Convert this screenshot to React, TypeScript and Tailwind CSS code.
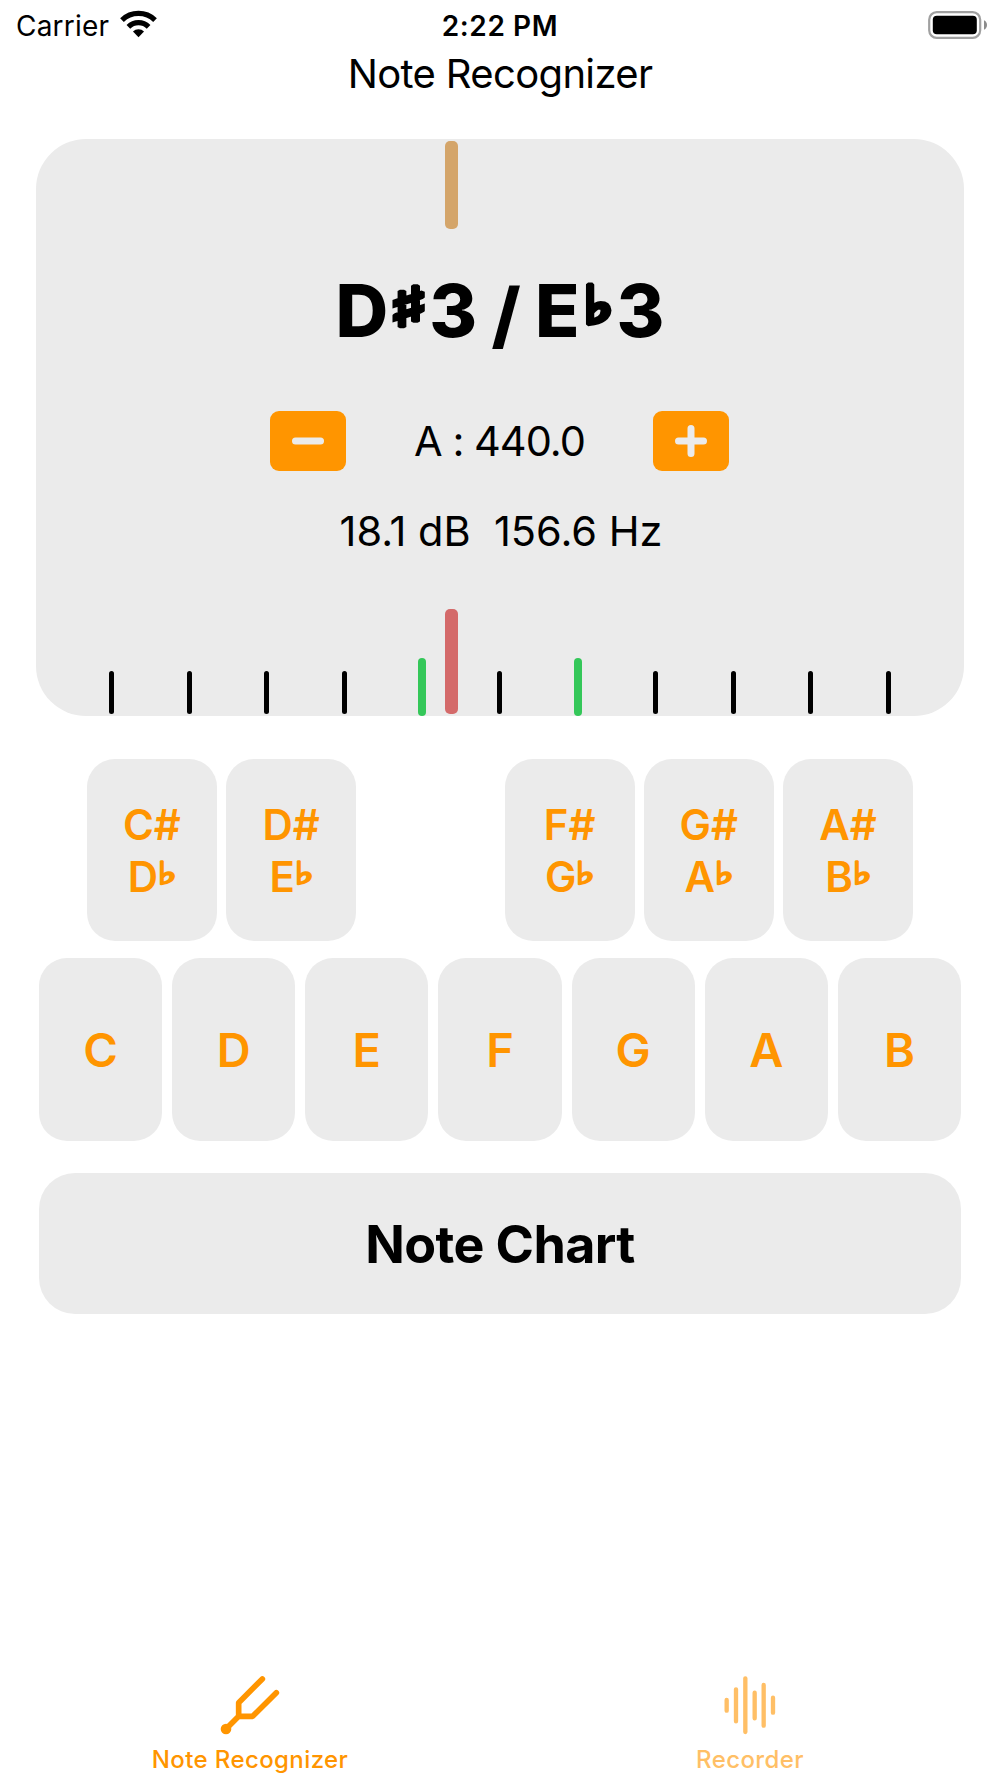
import type { ReactNode } from "react";

const sharps = [
  ["C#", "D"],
  ["D#", "E"],
  null,
  ["F#", "G"],
  ["G#", "A"],
  ["A#", "B"],
];

const naturals = ["C", "D", "E", "F", "G", "A", "B"];

// true = the in-tune limits, drawn taller and green
const ticks = [false, false, false, false, true, false, true, false, false, false, false];

const StatusBar = () => (
  <div className="grid h-[50px] grid-cols-3 items-center">
    <div className="flex items-center pl-4">
      <span className="w-[104px] pt-0.5 text-[28px] leading-none tracking-[0.2px]">Carrier</span>
      <svg className="-mt-0.5 h-7 w-[37px]" viewBox="360 28 112 84" fill="none">
        <path d="M366 58.2A72 72 0 0 1 466 58.2" stroke="#000" strokeWidth="16" />
        <path d="M385.4 78.4A44 44 0 0 1 446.6 78.4" stroke="#000" strokeWidth="16" />
        <path d="M416 110L399.3 92.7A24 24 0 0 1 432.7 92.7Z" fill="#000" />
      </svg>
    </div>
    <div className="pt-px text-center text-[28px] leading-none font-semibold tracking-[0.6px]">2:22 PM</div>
    <div className="flex justify-end pr-3">
      <svg className="h-7 w-[60px]" viewBox="0 0 60 28">
        <rect x="1.2" y="1.2" width="51" height="25.6" rx="7.5" fill="none" stroke="#a0a0a0" strokeWidth="2.2" />
        <rect x="4.8" y="4.8" width="44" height="18.4" rx="4" fill="#000" />
        <path d="M56 9.2C60 11 60 17 56 18.8Z" fill="#8c8c8c" />
      </svg>
    </div>
  </div>
);

const StepButton = ({ children }: { children: ReactNode }) => (
  <button className="flex h-[60px] w-[76px] items-center justify-center rounded-[9px] bg-[#ff9500]">
    <svg className="h-8 w-8" viewBox="0 0 32 32" stroke="#ebebeb" strokeWidth="7" strokeLinecap="round">
      {children}
    </svg>
  </button>
);

const Tuner = () => (
  <div className="mx-9 mt-[42px] flex h-[577px] flex-col rounded-[50px] bg-[#ebebeb]">
    <div className="mt-0.5 ml-[409px] h-[88px] w-[13px] rounded-[5px] bg-[#d4a56a]" />

    <h1 className="mt-9 h-[90px] text-center text-[73px] leading-[91px] font-extrabold [word-spacing:-1.7px]">
      D
      <span className="inline-block w-[41px] scale-x-150 text-center align-[11px] font-['DejaVu_Sans'] text-[54px] leading-0 [-webkit-text-stroke:4.5px_black]">
        ♯
      </span>
      3 <span className="relative top-1">/</span> E
      <span className="inline-block w-[37px] scale-x-120 text-center align-[14px] font-['DejaVu_Sans'] text-[52px] leading-0 [-webkit-text-stroke:5.5px_black]">
        ♭
      </span>
      3
    </h1>

    <div className="mt-14 flex items-center justify-between pr-[235px] pl-[234px]">
      <StepButton>
        <path d="M3.5 16H28.5" />
      </StepButton>
      <span className="text-[41.5px] leading-[60px] tracking-[-1px]">A : 440.0</span>
      <StepButton>
        <path d="M3.5 16H28.5M16 3.5V28.5" />
      </StepButton>
    </div>

    <div className="mt-[35px] pl-0.5 text-center text-[41.5px] leading-[51px] whitespace-pre">
      18.1 dB  156.6 Hz
    </div>

    {/* Cents scale */}
    <div className="relative mt-auto flex h-[107px] items-end justify-between px-[71.4px]">
      {ticks.map((inTune, i) => (
        <div key={i} className="flex w-2 justify-center">
          {inTune ? (
            <div className="h-[58px] w-2 rounded-full bg-[#34c759]" />
          ) : (
            <div className="mb-[2.5px] h-[43px] w-[5px] rounded-full bg-black" />
          )}
        </div>
      ))}
      <div className="absolute top-0 left-[409px] h-[105px] w-[13px] rounded-[5px] bg-[#d46a6a]" />
    </div>
  </div>
);

const Keyboard = () => (
  <div className="text-[#ff9500]">
    <div className="mx-[87px] mt-[43px] grid h-[182px] grid-cols-6 gap-[9.4px]">
      {sharps.map((key, i) =>
        key ? (
          <button
            key={i}
            className="flex flex-col items-center justify-center rounded-[28px] bg-[#ebebeb] pt-px text-[42px] leading-[52px] font-semibold"
          >
            <span>{key[0]}</span>
            <span>
              {key[1]}
              <span className="inline-block w-[18px] scale-x-130 text-center align-[8px] font-['DejaVu_Sans'] text-[31px] leading-0 [-webkit-text-stroke:2.2px_#ff9500]">
                ♭
              </span>
            </span>
          </button>
        ) : (
          <div key={i} />
        )
      )}
    </div>

    <div className="mx-[39px] mt-[17px] grid h-[183px] grid-cols-7 gap-[10px]">
      {naturals.map((note) => (
        <button key={note} className="rounded-[28px] bg-[#ebebeb] pt-0.5 text-[47px] font-semibold">
          {note}
        </button>
      ))}
    </div>
  </div>
);

const TabBar = () => (
  <nav className="mt-auto grid grid-cols-2 pb-[3px] text-[24px] leading-[30px] font-medium">
    <div className="flex flex-col items-center gap-[10px] text-[#ff9500]">
      <svg
        className="h-[60px] w-[60px]"
        viewBox="240 43 180 180"
        fill="none"
        stroke="currentColor"
        strokeWidth="17"
        strokeLinecap="round"
        strokeLinejoin="round"
      >
        <path d="M367 55L296 126V167L258 205M296 167H338L409 96" />
        <circle cx="258" cy="205" r="16" fill="currentColor" stroke="none" />
      </svg>
      <span className="tracking-[0.4px]">Note Recognizer</span>
    </div>
    <div className="flex flex-col items-center gap-[10px] text-[#ffbf66]">
      <svg
        className="h-[60px] w-[60px]"
        viewBox="120 43 180 180"
        stroke="currentColor"
        strokeWidth="13"
        strokeLinecap="round"
      >
        <path d="M140 118V150M168 86V182M196 53V214M224 96V173M251 73V195M279 111V156" />
      </svg>
      <span className="tracking-[0.4px]">Recorder</span>
    </div>
  </nav>
);

const App = () => {
  return (
    <div className="flex h-[1778px] w-[1000px] flex-col bg-white font-['Inter','DejaVu_Sans',sans-serif] text-black">
      <StatusBar />
      <div className="text-center text-[40px] leading-[47px] tracking-[-0.65px]">Note Recognizer</div>
      <Tuner />
      <Keyboard />
      <button className="mx-[39px] mt-8 h-[141px] rounded-[36px] bg-[#ebebeb] pt-0.5 text-[52px] font-bold tracking-[-0.6px]">
        Note Chart
      </button>
      <TabBar />
    </div>
  );
};

export default App;
